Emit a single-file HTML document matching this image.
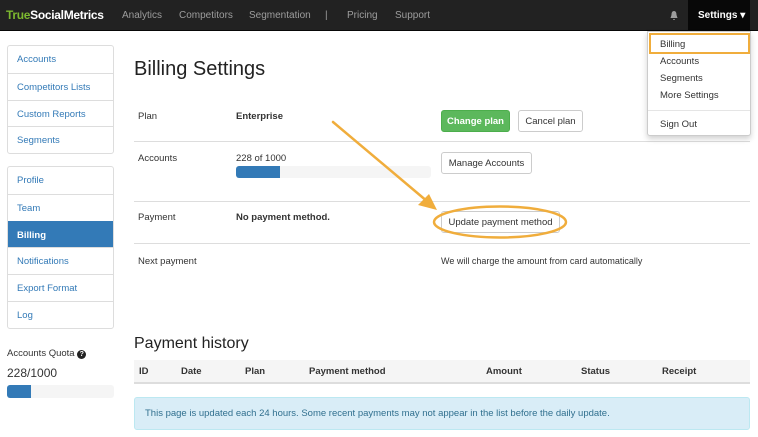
<!DOCTYPE html>
<html><head><style>
*{box-sizing:border-box;margin:0;padding:0}
body{width:758px;height:437px;overflow:hidden;background:#fff;font-family:"Liberation Sans",Arial,sans-serif;font-size:9.5px;color:#333;position:relative}
.nav{position:absolute;left:0;top:0;width:758px;height:31px;background:#222;border-bottom:1px solid #080808}
.nav span{position:absolute;top:10px;color:#9d9d9d;font-size:10px}
.lg{position:absolute;left:7px;width:107px;border:1px solid #ddd;border-radius:3px}
.lg div{height:26.8px;line-height:27px;padding-left:9px;color:#337ab7;border-top:1px solid #ddd;font-size:9.5px}
.lg div:first-child{border-top:none}
.lg .act{background:#337ab7;color:#fff;font-weight:bold;border-color:#337ab7}
.abs{position:absolute}
.row{position:absolute;left:134px;width:616px;border-top:1px solid #ddd}
.btn{position:absolute;border:1px solid #ccc;border-radius:3px;background:#fff;font-size:9.5px;color:#333;display:flex;align-items:center;justify-content:center;height:22px}
</style></head><body>
<div class="nav">
<span style="left:6px;top:8px;font-size:12px;font-weight:bold;color:#fff;letter-spacing:-0.3px"><b style="color:#7cb82f">True</b>SocialMetrics</span>
<span style="left:122px">Analytics</span>
<span style="left:179px">Competitors</span>
<span style="left:249px">Segmentation</span>
<span style="left:325px">|</span>
<span style="left:347px">Pricing</span>
<span style="left:395px">Support</span>
<svg class="abs" style="left:669px;top:10px" width="10" height="11" viewBox="0 0 10 11"><path d="M5 1C3 1 2.5 3 2.5 5L1.5 8h7L7.5 5C7.5 3 7 1 5 1zM4 9h2a1 1 0 0 1-2 0z" fill="#9d9d9d"/></svg>
<div class="abs" style="left:688px;top:0;width:62px;height:31px;background:#080808"></div>
<span style="left:698px;color:#fff;font-weight:bold">Settings ▾</span>
</div>
<div class="lg" style="top:45px"><div>Accounts</div><div>Competitors Lists</div><div>Custom Reports</div><div>Segments</div></div>
<div class="lg" style="top:166px"><div>Profile</div><div>Team</div><div class="act">Billing</div><div>Notifications</div><div>Export Format</div><div>Log</div></div>
<div class="abs" style="left:7px;top:348px;font-size:9.5px">Accounts Quota <span style="display:inline-block;width:9px;height:9px;border-radius:50%;background:#222;color:#fff;font-size:7px;text-align:center;line-height:9px;font-weight:bold">?</span></div>
<div class="abs" style="left:7px;top:366px;font-size:12px">228/1000</div>
<div class="abs" style="left:7px;top:385px;width:107px;height:13px;background:#f5f5f5;border-radius:3px"><div style="width:24px;height:13px;background:#337ab7;border-radius:3px 0 0 3px"></div></div>

<div class="abs" style="left:134px;top:58px;font-size:20px;color:#222">Billing Settings</div>
<div class="abs" style="left:138px;top:111px">Plan</div>
<div class="abs" style="left:236px;top:111px;font-weight:bold">Enterprise</div>
<div class="btn" style="left:441px;top:110px;width:69px;background:#5cb85c;border-color:#4cae4c;color:#fff;font-weight:bold">Change plan</div>
<div class="btn" style="left:518px;top:110px;width:65px">Cancel plan</div>
<div class="row" style="top:141px"></div>
<div class="abs" style="left:138px;top:153px">Accounts</div>
<div class="abs" style="left:236px;top:153px">228 of 1000</div>
<div class="abs" style="left:236px;top:166px;width:195px;height:12px;background:#f5f5f5;border-radius:3px"><div style="width:44px;height:12px;background:#337ab7;border-radius:3px 0 0 3px"></div></div>
<div class="btn" style="left:441px;top:152px;width:91px">Manage Accounts</div>
<div class="row" style="top:201px"></div>
<div class="abs" style="left:138px;top:212px">Payment</div>
<div class="abs" style="left:236px;top:212px;font-weight:bold">No payment method.</div>
<div class="btn" style="left:441px;top:211px;width:119px">Update payment method</div>
<div class="row" style="top:243px"></div>
<div class="abs" style="left:138px;top:256px">Next payment</div>
<div class="abs" style="left:441px;top:256px;font-size:9px">We will charge the amount from card automatically</div>

<div class="abs" style="left:134px;top:335px;font-size:16px;color:#222">Payment history</div>
<div class="abs" style="left:134px;top:360px;width:616px;height:24px;background:#f5f5f5;border-bottom:2px solid #ddd;font-weight:bold;font-size:9.5px">
<span class="abs" style="left:5px;top:6px">ID</span><span class="abs" style="left:47px;top:6px">Date</span><span class="abs" style="left:111px;top:6px">Plan</span><span class="abs" style="left:175px;top:6px">Payment method</span><span class="abs" style="left:352px;top:6px">Amount</span><span class="abs" style="left:447px;top:6px">Status</span><span class="abs" style="left:528px;top:6px">Receipt</span></div>
<div class="abs" style="left:134px;top:397px;width:616px;height:33px;background:#d9edf7;border:1px solid #bce8f1;border-radius:3px;color:#31708f;padding:10px 0 0 10px;font-size:9.5px">This page is updated each 24 hours. Some recent payments may not appear in the list before the daily update.</div>

<div class="abs" style="left:647px;top:31px;width:104px;height:105px;background:#fff;border:1px solid #ccc;border-radius:0 0 3px 3px;box-shadow:0 3px 6px rgba(0,0,0,.18)">
<div class="abs" style="left:12px;top:7px;color:#333">Billing</div>
<div class="abs" style="left:12px;top:24px">Accounts</div>
<div class="abs" style="left:12px;top:41px">Segments</div>
<div class="abs" style="left:12px;top:58px">More Settings</div>
<div class="abs" style="left:0;top:78px;width:102px;border-top:1px solid #e5e5e5"></div>
<div class="abs" style="left:12px;top:87px">Sign Out</div>
</div>
<div class="abs" style="left:649px;top:33px;width:101px;height:21px;border:2px solid #f0ad3c"></div>

<svg class="abs" style="left:0;top:0" width="758" height="437">
<line x1="333" y1="122" x2="428" y2="202" stroke="#f0ad3c" stroke-width="2.5" stroke-linecap="round"/>
<path d="M437 210 L418 205 L429 194 Z" fill="#f0ad3c"/>
<ellipse cx="500" cy="222" rx="66" ry="15.5" fill="none" stroke="#f0ad3c" stroke-width="2.5"/>
</svg>
</body></html>
